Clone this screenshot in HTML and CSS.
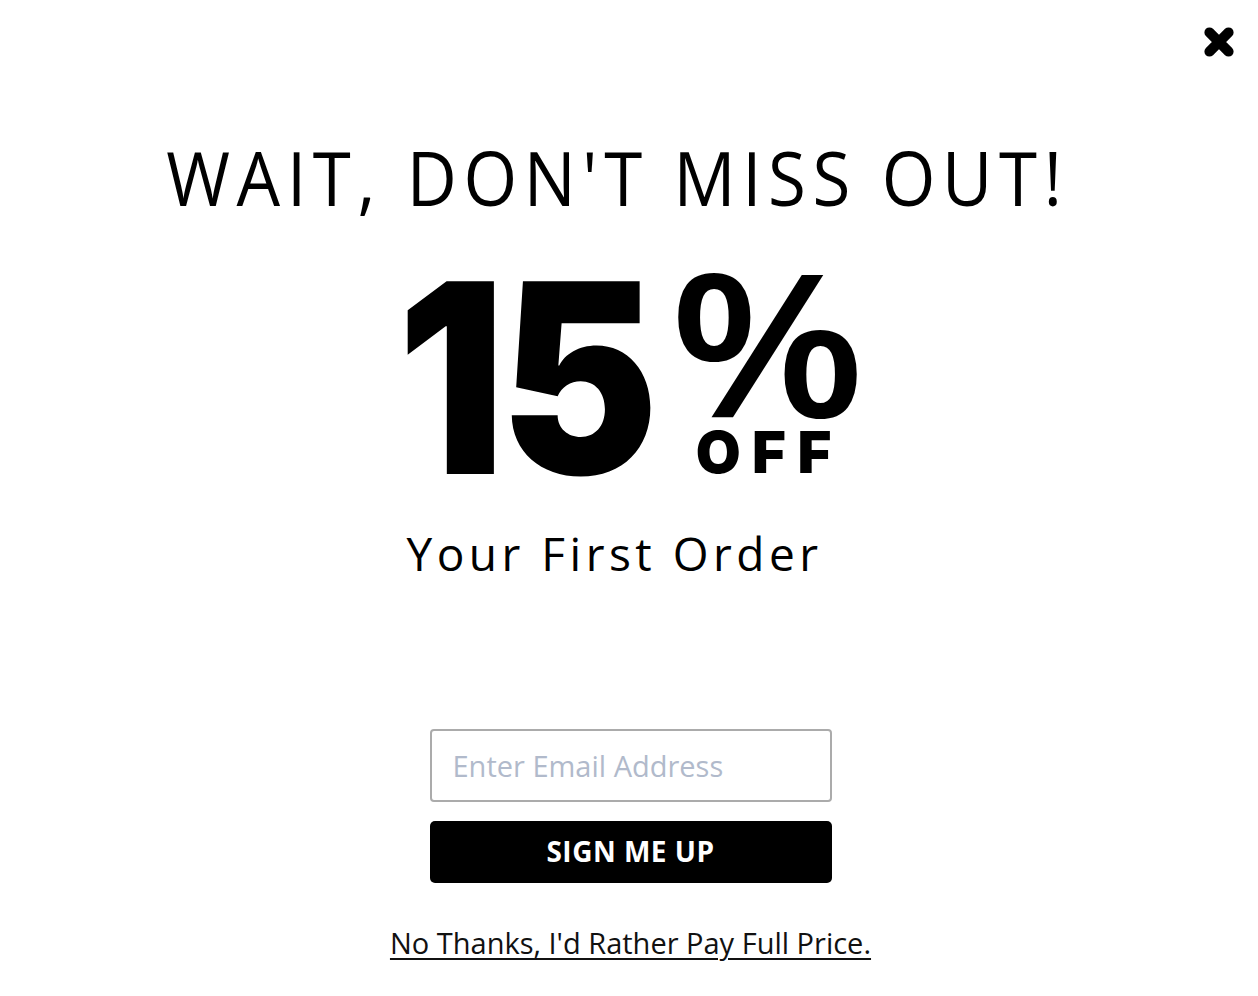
FILE: index.html
```html
<!DOCTYPE html>
<html lang="en">
<head>
<meta charset="utf-8">
<title>Wait, don't miss out!</title>
<link rel="stylesheet" href="styles.css">
</head>
<body>
<div class="popup">
  <button class="close" aria-label="Close">
    <svg viewBox="0 0 32 32" width="34" height="34" aria-hidden="true">
      <path d="M7 7 L25 25 M25 7 L7 25" fill="none" stroke="#000" stroke-width="9.5" stroke-linecap="round"/>
    </svg>
  </button>
  <h1 class="headline">WAIT, DON'T MISS OUT!</h1>
  <div class="offer">
    <div class="num-box"><span class="num">15</span></div>
    <div class="pct-col">
      <span class="pct">%</span>
      <span class="off">OFF</span>
    </div>
  </div>
  <p class="sub">Your First Order</p>
  <form class="form">
    <input class="email" type="email" placeholder="Enter Email Address">
    <button class="submit" type="button">SIGN ME UP</button>
  </form>
  <a class="decline" href="#">No Thanks, I'd Rather Pay Full Price.</a>
</div>
</body>
</html>
```
FILE: styles.css
```css
html, body {
  margin: 0;
  padding: 0;
  background: #fff;
}
body {
  font-family: "Open Sans", "Liberation Sans", sans-serif;
  color: #000;
}
.popup {
  position: relative;
  width: 1258px;
  height: 996px;
  display: flex;
  flex-direction: column;
  align-items: center;
  box-sizing: border-box;
  padding-top: 140px;
  overflow: hidden;
}
.close {
  position: absolute;
  top: 25px;
  right: 22px;
  border: 0;
  background: none;
  padding: 0;
  width: 34px;
  height: 34px;
  cursor: pointer;
}
.close svg { display: block; }
.headline {
  margin: 0 0 0 -24px;
  font-family: "Open Sans", sans-serif;
  font-weight: 400;
  font-size: 75px;
  line-height: 1;
  letter-spacing: 7.25px;
  transform: scaleX(0.92);
  white-space: nowrap;
}
.offer {
  display: flex;
  align-items: flex-start;
  gap: 23px;
  margin-top: 58px;
  margin-left: 4px;
}
.num-box {
  width: 250px;
  height: 210px;
  display: flex;
  justify-content: center;
}
.num {
  flex: none;
  font-family: Inter, "Liberation Sans", sans-serif;
  font-weight: 900;
  font-size: 265px;
  line-height: 210px;
  letter-spacing: -6px;
  margin-left: -6px;
  white-space: nowrap;
  transform: scaleX(0.9);
}
.pct-col {
  width: 182px;
  display: flex;
  flex-direction: column;
  align-items: center;
}
.pct {
  flex: none;
  font-family: "Open Sans", sans-serif;
  font-weight: 600;
  font-size: 200px;
  line-height: 160px;
  height: 160px;
  margin-top: -13px;
  transform: scaleX(1.14);
}
.off {
  flex: none;
  font-family: Inter, "Liberation Sans", sans-serif;
  font-weight: 900;
  font-size: 58px;
  line-height: 50px;
  letter-spacing: 11.5px;
  margin-top: 7px;
  margin-left: 3.5px;
  white-space: nowrap;
}
.sub {
  margin: 47px 0 0 -29px;
  font-family: "Open Sans", sans-serif;
  font-size: 46px;
  line-height: 1;
  letter-spacing: 4.5px;
}
.form {
  display: flex;
  flex-direction: column;
  gap: 19px;
  margin-top: 153px;
  margin-left: 3px;
}
.email {
  width: 402px;
  height: 73px;
  box-sizing: border-box;
  border: 2px solid #ababab;
  border-radius: 4px;
  padding: 0 21px;
  font-family: "Open Sans", sans-serif;
  font-size: 29px;
  color: #333;
  outline: none;
}
.email::placeholder { color: #b1bacb; }
.submit {
  width: 402px;
  height: 62px;
  border: 0;
  border-radius: 5px;
  background: #000;
  color: #fff;
  font-family: "Open Sans", sans-serif;
  font-weight: 700;
  font-size: 28px;
  letter-spacing: 0.5px;
  padding-bottom: 3px;
  cursor: pointer;
}
.decline {
  margin-top: 40px;
  margin-left: 3px;
  font-family: "Open Sans", sans-serif;
  font-size: 29px;
  color: #111;
  text-decoration: underline;
  text-underline-offset: 4px;
  text-decoration-thickness: 1.5px;
}
```
